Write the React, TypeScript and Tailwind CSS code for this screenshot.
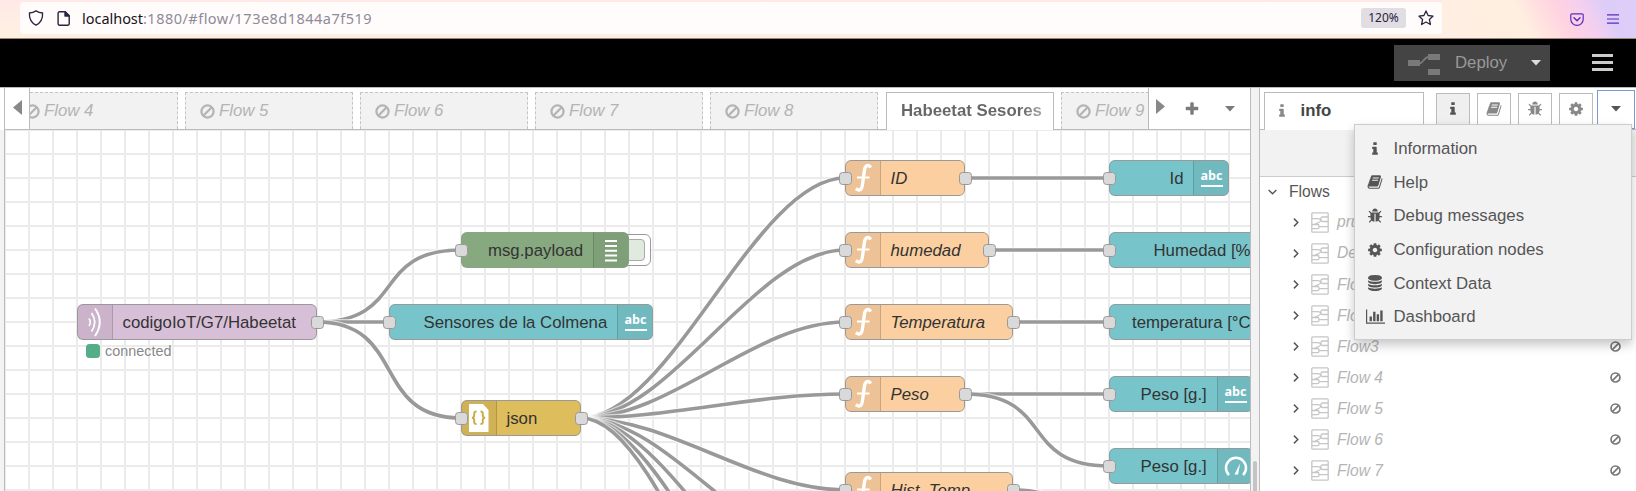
import React from "react";

const FA = {
  info: "M1216 1344v128q0 26-19 45t-45 19h-512q-26 0-45-19t-19-45v-128q0-26 19-45t45-19h64v-384h-64q-26 0-45-19t-19-45v-128q0-26 19-45t45-19h384q26 0 45 19t19 45v576h64q26 0 45 19t19 45zm-128-1152v192q0 26-19 45t-45 19h-256q-26 0-45-19t-19-45v-192q0-26 19-45t45-19h256q26 0 45 19t19 45z",
  book: "M1703 478q40 57 18 129l-275 906q-19 64-76.5 107.5t-122.5 43.5h-923q-77 0-148.5-53.5t-99.5-131.5q-24-67-2-127 0-4 3-27t4-37q1-8-3-21.5t-3-19.5q2-11 8-21t16.5-23.5 16.5-23.5q23-38 45-91.5t30-91.5q3-10 .5-30t-.5-28q3-11 17-28t17-23q21-36 42-92t25-90q1-9-2.5-32t.5-28q4-13 22-30.5t22-22.5q19-26 42.5-84.5t27.5-96.5q1-8-3-25.5t-2-26.5q2-8 9-18t18-23 17-21q8-12 16.5-30.5t15-35 16-36 19.5-32 26.5-23.5 36-11.5 47.5 5.5l-1 3q38-9 51-9h761q74 0 114 56t18 130l-274 906q-36 119-71.5 153.5t-128.5 34.5h-869q-27 0-38 15-11 16-1 43 24 70 144 70h923q29 0 56-15.5t35-41.5l300-987q7-22 5-57 38 15 59 43zm-1064 2q-4 13 2 22.5t20 9.5h608q13 0 25.5-9.5t16.5-22.5l21-64q4-13-2-22.5t-20-9.5h-608q-13 0-25.5 9.5t-16.5 22.5zm-83 256q-4 13 2 22.5t20 9.5h608q13 0 25.5-9.5t16.5-22.5l21-64q4-13-2-22.5t-20-9.5h-608q-13 0-25.5 9.5t-16.5 22.5z",
  bug: "M1696 960q0 26-19 45t-45 19h-224q0 171-67 290l208 209q19 19 19 45t-19 45q-18 19-45 19t-45-19l-198-197q-5 5-15 13t-42 28.5-65 36.5-82 29-97 13v-896h-128v896q-51 0-101.5-13.5t-87-33-66-39-43.5-32.5l-15-14-183 207q-20 21-48 21-24 0-43-16-19-18-20.5-44.5t15.5-46.5l202-227q-58-114-58-274h-224q-26 0-45-19t-19-45 19-45 45-19h224v-294l-173-173q-19-19-19-45t19-45 45-19 45 19l173 173h844l173-173q19-19 45-19t45 19 19 45-19 45l-173 173v294h224q26 0 45 19t19 45zm-480-576h-640q0-133 93.5-226.5t226.5-93.5 226.5 93.5 93.5 226.5z",
  cog: "M1152 896q0-106-75-181t-181-75-181 75-75 181 75 181 181 75 181-75 75-181zm512-109v222q0 12-8 23t-20 13l-185 28q-19 54-39 91 35 50 107 138 10 12 10 25t-9 23q-27 37-99 108t-94 71q-12 0-26-9l-138-108q-44 23-91 38-16 136-29 186-7 28-36 28h-222q-14 0-24.5-8.5t-11.5-21.5l-28-184q-49-16-90-37l-141 107q-10 9-25 9-14 0-25-11-126-114-165-168-7-10-7-23 0-12 8-23 15-21 51-66.5t54-70.5q-27-50-41-99l-183-27q-13-2-21-12.5t-8-23.5v-222q0-12 8-23t19-13l186-28q14-46 39-92-40-57-107-138-10-12-10-24 0-10 9-23 26-36 98.5-107.5t94.5-71.5q13 0 26 10l138 107q44-23 91-38 16-136 29-186 7-28 36-28h222q14 0 24.5 8.5t11.5 21.5l28 184q49 16 90 37l142-107q9-9 24-9 13 0 25 10 129 119 165 170 7 8 7 22 0 12-8 23-15 21-51 66.5t-54 70.5q26 50 41 98l183 28q13 2 21 12.5t8 23.5z",
  database:
    "M896 768q237 0 443-43t325-127v170q0 69-103 128t-280 93.5-385 34.5-385-34.5-280-93.5-103-128v-170q119 84 325 127t443 43zm0 768q237 0 443-43t325-127v170q0 69-103 128t-280 93.5-385 34.5-385-34.5-280-93.5-103-128v-170q119 84 325 127t443 43zm0-384q237 0 443-43t325-127v170q0 69-103 128t-280 93.5-385 34.5-385-34.5-280-93.5-103-128v-170q119 84 325 127t443 43zm0-1152q208 0 385 34.5t280 93.5 103 128v128q0 69-103 128t-280 93.5-385 34.5-385-34.5-280-93.5-103-128v-128q0-69 103-128t280-93.5 385-34.5z",
  chart:
    "M640 896v512h-256v-512h256zm384-512v1024h-256v-1024h256zm1024 1152v128h-2048v-1536h128v1408h1920zm-640-896v768h-256v-768h256zm384-384v1152h-256v-1152h256z",
  plus: "M1600 736v192q0 40-28 68t-68 28h-416v416q0 40-28 68t-68 28h-192q-40 0-68-28t-28-68v-416h-416q-40 0-68-28t-28-68v-192q0-40 28-68t68-28h416v-416q0-40 28-68t68-28h192q40 0 68 28t28 68v416h416q40 0 68 28t28 68z",
};

type FaName = keyof typeof FA;

function Fa({ name, size = "h-[16px] w-[16px]" }: { name: FaName; size?: string }) {
  const wide = name === "chart";
  return (
    <svg
      viewBox={wide ? "0 0 2048 1792" : "0 0 1792 1792"}
      className={`shrink-0 fill-current ${wide ? "h-[17px] w-[19px]" : size}`}
    >
      <path d={FA[name]} />
    </svg>
  );
}

function Ban({ className = "" }: { className?: string }) {
  return (
    <svg viewBox="0 0 16 16" className={`shrink-0 ${className}`} fill="none" stroke="currentColor" strokeWidth="2.400">
      <circle cx="8" cy="8" r="6.500" />
      <path d="M3.500 12.500L12.500 3.500" />
    </svg>
  );
}

function Caret({ className = "" }: { className?: string }) {
  return (
    <svg viewBox="0 0 10 6" className={`h-[6px] w-[10px] shrink-0 fill-current ${className}`}>
      <path d="M0 0h10L5 5.600z" />
    </svg>
  );
}

function BrowserBar() {
  return (
    <div className="flex h-[39px] w-full shrink-0 items-start border-b border-[#9c8878] bg-[linear-gradient(180deg,#ffe9e6_0%,#ffeee4_60%,#fdf0e0_100%)] pl-5">
      <div className="mt-[2px] flex h-[32px] w-[1422px] shrink-0 items-center rounded bg-[#fffcfb] pl-[8px] pr-[8px] text-[#2b2340]">
        <svg viewBox="0 0 16 16" className="h-4 w-4" fill="none" stroke="currentColor" strokeWidth="1.300" strokeLinejoin="round">
          <path d="M8 .9c2 1.400 4.300 2 6.600 2.100.3 5.300-1.600 9.600-6.600 12.200C3 12.600 1.100 8.300 1.400 3 3.700 2.900 6 2.300 8 .9z" />
        </svg>
        <svg viewBox="0 0 13 15" className="ml-[13px] h-[15px] w-[13px]" fill="none" stroke="currentColor" strokeWidth="1.400" strokeLinejoin="round">
          <path d="M2.500 .8H8.200L12.200 4.800V12.800a1.400 1.400 0 0 1-1.400 1.400H2.500A1.400 1.400 0 0 1 1.100 12.800V2.200A1.400 1.400 0 0 1 2.500.8z" />
          <path d="M8 .8V5h4.200z" fill="currentColor" />
        </svg>
        <div className="ml-[12px] whitespace-nowrap font-['Noto_Sans',sans-serif] text-[14.500px] leading-none text-[#8f8a9a]">
          <span className="tracking-[-0.03px] text-[#15141a]">localhost</span>
          <span className="tracking-[0.480px]">:1880/#flow/173e8d1844a7f519</span>
        </div>
        <div className="ml-auto flex h-5 w-[45px] items-center justify-center rounded-[3px] bg-[#e0dde3] font-['Noto_Sans',sans-serif] text-[12px] text-[#2b2340]">
          120%
        </div>
        <svg viewBox="0 0 16 16" className="ml-[12px] h-4 w-4" fill="none" stroke="currentColor" strokeWidth="1.300" strokeLinejoin="round">
          <path d="M8 .9l2.100 4.600 5 .6-3.700 3.400 1 5L8 12l-4.400 2.500 1-5L.9 6.100l5-.6z" />
        </svg>
      </div>
      <div className="flex h-[38px] flex-1 items-center justify-end bg-[linear-gradient(62deg,#ffeee2_0%,#ffefe0_42%,#ffe3e0_50%,#ffd2e2_62%,#f3cff0_74%,#dccdf8_84%,#dccdfa_100%)] pr-[17px] text-[#5a2cb8]">
        <svg viewBox="0 0 14 13" className="h-[13px] w-[14px]" fill="none" stroke="currentColor" strokeWidth="1.200" strokeLinecap="round" strokeLinejoin="round">
          <path d="M2 .8h10a1.200 1.200 0 0 1 1.200 1.200v4.200a6.200 6.200 0 0 1-12.400 0V2A1.200 1.200 0 0 1 2 .8z" />
          <path d="M4 4.800l3 2.900 3-2.900" strokeWidth="1.400" />
        </svg>
        <svg viewBox="0 0 12 10" className="ml-[23px] h-[10px] w-3" stroke="currentColor" strokeWidth="1.200">
          <path d="M0 .8h12M0 5h12M0 9.200h12" />
        </svg>
      </div>
    </div>
  );
}

function Header() {
  return (
    <div className="flex h-[48px] w-full shrink-0 items-center justify-end bg-black pr-[23px]">
      <div className="flex h-[36px] w-[156px] items-center bg-[#444] text-[#999]">
        <svg viewBox="0 0 32 21" className="ml-[14px] mt-[2px] h-[21px] w-8" fill="#797979">
          <rect x="0" y="6" width="12" height="6" />
          <rect x="20" y="0" width="12" height="6" />
          <rect x="20" y="15" width="12" height="6" />
          <path d="M11 9.500C16 9.500 15 3 21 3" fill="none" stroke="#797979" strokeWidth="1.800" />
        </svg>
        <span className="ml-[15px] text-[16.800px]">Deploy</span>
        <Caret className="ml-auto mr-[9px] text-[#ddd]" />
      </div>
      <div className="mb-px ml-[42px] flex w-[21px] flex-col gap-[4px]">
        <span className="h-[3px] bg-[#ccc]" />
        <span className="h-[3px] bg-[#ccc]" />
        <span className="h-[3px] bg-[#ccc]" />
      </div>
    </div>
  );
}

function FlowTab({ label }: { label: string }) {
  return (
    <div className="flex h-[37px] w-[168px] shrink-0 items-center border border-b-0 border-dashed border-[#c4c4c4] bg-[#f2f2f2] pl-[14px] text-[16.800px] italic text-[#b4b4b4]">
      <Ban className="mr-[4px] h-[15px] w-[15px]" />
      {label}
    </div>
  );
}

function TabBar() {
  return (
    <div className="flex h-[42px] shrink-0 border-b border-[#bbb] bg-white text-[#7b7b7b]">
      <div className="flex w-[25px] shrink-0 items-center border-r border-[#bbb] pl-[8px]">
        <svg viewBox="0 0 9 15" className="mb-[2px] h-[15px] w-[9px] fill-[#888]">
          <path d="M9 0v15L0 7.500z" />
        </svg>
      </div>
      <div className="flex h-[42px] w-[1118px] shrink-0 items-end overflow-hidden">
        <div className="-ml-[20px] flex items-end gap-[7px] pb-px">
          <FlowTab label="Flow 4" />
          <FlowTab label="Flow 5" />
          <FlowTab label="Flow 6" />
          <FlowTab label="Flow 7" />
          <FlowTab label="Flow 8" />
          <div className="-mb-px ml-px flex h-[38px] w-[168px] shrink-0 items-center overflow-hidden border border-b-0 border-[#bbb] bg-white pb-px pl-[14px]">
            <span className="whitespace-nowrap bg-gradient-to-r from-[#666] from-85% to-[#aaa] bg-clip-text text-[16.800px] font-bold text-transparent">
              Habeetat Sesores
            </span>
          </div>
          <FlowTab label="Flow 9" />
        </div>
      </div>
      <div className="flex flex-1 items-center border-l border-[#bbb]">
        <svg viewBox="0 0 9 15" className="mb-[4px] ml-[7px] h-[15px] w-[9px] fill-[#888]">
          <path d="M0 0v15l9-7.500z" />
        </svg>
        <span className="ml-[19px]">
          <Fa name="plus" />
        </span>
        <Caret className="ml-auto mr-[15px]" />
      </div>
    </div>
  );
}

const ORIGIN_X = 5;
const ORIGIN_Y = 130;

const wires: [number, number, number, number][] = [
  [317, 322, 461, 250],
  [317, 322, 389, 322],
  [317, 322, 461, 418],
  [581, 418, 845, 178],
  [581, 418, 845, 250],
  [581, 418, 845, 322],
  [581, 418, 845, 394],
  [581, 418, 845, 490],
  [581, 418, 845, 562],
  [581, 418, 845, 634],
  [581, 418, 845, 706],
  [581, 418, 845, 778],
  [965, 178, 1109, 178],
  [989, 250, 1109, 250],
  [1013, 322, 1109, 322],
  [965, 394, 1109, 394],
  [965, 394, 1109, 466],
  [1013, 490, 1109, 538],
];

function wirePath([x1, y1, x2, y2]: [number, number, number, number]) {
  const reach = 90 * Math.min(1, Math.hypot(x2 - x1, y2 - y1) / 120);
  return `M${x1} ${y1}C${x1 + reach} ${y1} ${x2 - reach} ${y2} ${x2} ${y2}`;
}

type IconKind = "function" | "text" | "gauge" | "mqtt" | "json" | "debug";

type FlowNode = {
  x: number;
  y: number;
  w: number;
  label: string;
  labelX: number;
  color: string;
  icon?: IconKind;
  side: "left" | "right";
  input?: boolean;
  output?: boolean;
  italic?: boolean;
};

const UI = "bg-[#77c5cb]";
const FN = "bg-[#fccfa0]";

const nodes: FlowNode[] = [
  { x: 77, y: 322, w: 240, label: "codigoIoT/G7/Habeetat", labelX: 45.5, color: "bg-[#d8bfd8]", icon: "mqtt", side: "left", output: true },
  { x: 461, y: 250, w: 168, label: "msg.payload", labelX: 27, color: "bg-[#87a980]", icon: "debug", side: "right", input: true },
  { x: 389, y: 322, w: 264, label: "Sensores de la Colmena", labelX: 34.5, color: UI, icon: "text", side: "right", input: true },
  { x: 461, y: 418, w: 120, label: "json", labelX: 45.5, color: "bg-[#debd5c]", icon: "json", side: "left", input: true, output: true },
  { x: 845, y: 178, w: 120, label: "ID", labelX: 45.5, color: FN, icon: "function", side: "left", input: true, output: true, italic: true },
  { x: 845, y: 250, w: 144, label: "humedad", labelX: 45.5, color: FN, icon: "function", side: "left", input: true, output: true, italic: true },
  { x: 845, y: 322, w: 168, label: "Temperatura", labelX: 45.5, color: FN, icon: "function", side: "left", input: true, output: true, italic: true },
  { x: 845, y: 394, w: 120, label: "Peso", labelX: 45.5, color: FN, icon: "function", side: "left", input: true, output: true, italic: true },
  { x: 845, y: 490, w: 168, label: "Hist. Temp", labelX: 45.5, color: FN, icon: "function", side: "left", input: true, output: true, italic: true },
  { x: 1109, y: 178, w: 120, label: "Id", labelX: 60.5, color: UI, icon: "text", side: "right", input: true },
  { x: 1109, y: 250, w: 192, label: "Humedad [%]", labelX: 44.5, color: UI, side: "right", input: true },
  { x: 1109, y: 322, w: 192, label: "temperatura [°C]", labelX: 23, color: UI, side: "right", input: true },
  { x: 1109, y: 394, w: 144, label: "Peso [g.]", labelX: 31.5, color: UI, icon: "text", side: "right", input: true },
  { x: 1109, y: 466, w: 144, label: "Peso [g.]", labelX: 31.5, color: UI, icon: "gauge", side: "right", input: true },
];

function NodeIcon({ kind }: { kind: IconKind }) {
  if (kind === "text")
    return (
      <span className="flex flex-col items-center">
        <span className="font-['Open_Sans',sans-serif] text-[12.500px] font-bold leading-[14px] text-white">abc</span>
        <span className="mt-[2px] h-[2px] w-[22px] bg-white" />
      </span>
    );
  return (
    <svg viewBox="0 0 36 36" className="h-[36px] w-[36px] shrink-0" fill="none" stroke="#fff">
      {kind === "function" && (
        <>
          <path d="M26 7.300C22.600 3.900 20 5.600 19.400 10.500L17.600 24C16.900 29.800 14.700 31.500 10.800 28.700" strokeWidth="3.300" />
          <path d="M12 17.600h12.500" strokeWidth="2" />
        </>
      )}
      {kind === "mqtt" && (
        <>
          <path d="M12 14.500q2.600 4 0 7.500" strokeWidth="1.700" />
          <path d="M14.500 9q6.500 9 0 18.500" strokeWidth="1.800" />
          <path d="M18 4.500q9.500 13.500 0 27.500" strokeWidth="1.900" />
        </>
      )}
      {kind === "json" && (
        <>
          <path d="M8 4h14l5.500 6v22H8z" fill="#fff" stroke="none" />
          <path d="M15.500 11.500q-2.600 0-2.300 2.700.4 3.300-2.200 3.600 2.600.3 2.200 3.600-.3 2.700 2.300 2.700M19.500 11.500q2.600 0 2.300 2.700-.4 3.300 2.200 3.600-2.600.3-2.200 3.600.3 2.700-2.300 2.700" stroke="#cba943" strokeWidth="2" />
        </>
      )}
      {kind === "debug" && <path d="M11 9h12M11 14h12M11 18.800h12M11 23.600h12M11 28.400h12" strokeWidth="2" />}
      {kind === "gauge" && (
        <>
          <path d="M11 27A10 10 0 1 1 25 27" strokeWidth="2.500" />
          <path d="M16.500 26.500l3.500 0L22.300 15z" fill="#fff" stroke="none" />
        </>
      )}
    </svg>
  );
}

function Port({ end }: { end: "left" | "right" }) {
  return (
    <span
      className={`absolute top-[11.500px] h-[13px] w-[13px] rounded-[3.500px] border border-[#999] bg-[#d9d9d9] ${
        end === "left" ? "-left-[6.500px]" : "-right-[6.500px]"
      }`}
    />
  );
}

function NodeBox({ node }: { node: FlowNode }) {
  return (
    <div className="absolute h-[36px]" style={{ left: node.x - ORIGIN_X, top: node.y - 18 - ORIGIN_Y, width: node.w }}>
      <div className={`relative h-full w-full overflow-hidden rounded-[6px] ${node.color}`}>
        {node.icon && (
          <div
            className={`absolute inset-y-0 flex w-[36px] items-center justify-center bg-black/[0.06] ${
              node.side === "left" ? "left-0 border-r border-black/15" : "right-0 border-l border-black/15"
            }`}
          >
            <NodeIcon kind={node.icon} />
          </div>
        )}
        <span
          className={`absolute top-0 whitespace-nowrap text-[16.800px] leading-[37px] text-[#333] ${node.italic ? "italic" : ""}`}
          style={{ left: node.labelX }}
        >
          {node.label}
        </span>
        <span className={`absolute inset-0 rounded-[6px] border ${node.icon === "debug" ? "border-[#999]/40" : "border-[#999]"}`} />
      </div>
      {node.input && <Port end="left" />}
      {node.output && <Port end="right" />}
    </div>
  );
}

function Canvas() {
  return (
    <div className="relative flex-1 overflow-hidden bg-white bg-[linear-gradient(90deg,#ebebeb_0,#ebebeb_2px,transparent_2px),linear-gradient(180deg,#ebebeb_0,#ebebeb_2px,transparent_2px)] bg-[length:24px_24px] bg-[position:-1px_-1px]">
      <svg className="absolute left-0 top-0 h-full w-full" viewBox="5 130 1245 361" fill="none">
        {wires.map((w) => (
          <g key={w.join()}>
            <path d={wirePath(w)} stroke="#fff" strokeWidth="6" opacity="0.6" />
            <path d={wirePath(w)} stroke="#999" strokeWidth="3.600" />
          </g>
        ))}
      </svg>
      <div className="absolute left-[609px] top-[104px] h-[32px] w-[37px] rounded-[6px] border border-[#999] bg-white">
        <div className="ml-px mt-[4px] h-[22px] w-[29px] rounded-[4px] border border-[#a8aaa6] bg-[#e1eadf]" />
      </div>
      {nodes.map((n) => (
        <NodeBox key={`${n.x}-${n.y}`} node={n} />
      ))}
      <div className="absolute left-[81px] top-[213px] flex items-center">
        <span className="h-[14px] w-[14px] rounded-[3.500px] bg-[#53ad88]" />
        <span className="ml-[5px] text-[14.400px] leading-[16px] text-[#888]">connected</span>
      </div>
    </div>
  );
}

function FlowIcon() {
  return (
    <svg viewBox="0 0 18 21" className="h-[21px] w-[18px] shrink-0" fill="none" stroke="#c6c6c6" strokeWidth="1.300">
      <rect x=".8" y=".8" width="16.400" height="19.400" rx="1" />
      <path d="M1 6.600h5.500Q8 6.600 9.500 7.500M17 9.500h-5.500a1.500 1.500 0 0 1-1.500-1.500V6.500A1.500 1.500 0 0 1 11.500 5H17M1 12.500h5.500a1.500 1.500 0 0 1 1.500 1.500v1.200a1.500 1.500 0 0 1-1.500 1.500H1M8 14.600h9M10 8Q9 10.500 7 10.800T3.500 12.500" />
    </svg>
  );
}

function TreeRow({ label }: { label: string }) {
  return (
    <div className="flex h-[31.100px] shrink-0 items-center pl-[33px] pr-[15px]">
      <svg viewBox="0 0 6 10" className="h-[9px] w-[6px]" fill="none" stroke="#555" strokeWidth="1.600">
        <path d="M.7.7L5 5 .7 9.300" />
      </svg>
      <span className="ml-[12px] flex items-center">
        <FlowIcon />
      </span>
      <span className="ml-[8px] text-[15.600px] italic text-[#b4b4b4]">{label}</span>
      <Ban className="ml-auto h-[11px] w-[11px] text-[#777]" />
    </div>
  );
}

function SidebarButton({ name, active = false }: { name: FaName; active?: boolean }) {
  return (
    <div
      className={`flex h-[34px] w-[34px] items-center justify-center border border-[#bbb] pb-[2px] pr-px ${
        active ? "bg-[#efefef] text-[#555]" : "bg-white text-[#888]"
      }`}
    >
      <Fa name={name} />
    </div>
  );
}

const menuItems: { icon: FaName; label: string }[] = [
  { icon: "info", label: "Information" },
  { icon: "book", label: "Help" },
  { icon: "bug", label: "Debug messages" },
  { icon: "cog", label: "Configuration nodes" },
  { icon: "database", label: "Context Data" },
  { icon: "chart", label: "Dashboard" },
];

function SidebarMenu() {
  return (
    <div className="absolute left-[94px] top-[36px] flex h-[216px] w-[278px] flex-col border border-[#ccc] bg-[#f2f2f2] pt-[7px] shadow-[0_5px_10px_rgba(0,0,0,0.22)]">
      {menuItems.map((m) => (
        <div key={m.label} className="flex h-[33.600px] shrink-0 items-center text-[16.800px] text-[#555]">
          <span className="ml-[10px] flex w-[20px] justify-center">
            <Fa name={m.icon} />
          </span>
          <span className="ml-[8.500px]">{m.label}</span>
        </div>
      ))}
    </div>
  );
}

function Sidebar() {
  return (
    <div className="relative flex w-[377px] shrink-0 flex-col border-l border-[#bbb] bg-white">
      <div className="flex h-[42px] shrink-0 items-end border-b border-[#bbb]">
        <div className="-mb-px ml-[4px] flex h-[38px] w-[160px] items-center border border-b-0 border-[#bbb] bg-white pb-px pl-[9px] text-[#888]">
          <Fa name="info" />
          <span className="ml-[10.500px] text-[16.800px] font-bold text-[#444]">info</span>
        </div>
        <div className="mb-[2px] ml-[12px] flex gap-[7px]">
          <SidebarButton name="info" active />
          <SidebarButton name="book" />
          <SidebarButton name="bug" />
          <SidebarButton name="cog" />
        </div>
        <div className="ml-[4px] flex h-[39px] w-[38px] items-center justify-center border border-[#7b9bd0] bg-white pb-[2px] pr-px text-[#555]">
          <Caret />
        </div>
      </div>
      <div className="h-[47px] shrink-0 border-b border-[#ccc] bg-[#f2f2f2]" />
      <div className="flex h-[29px] shrink-0 items-center pl-[8px] text-[15.600px] text-[#555]">
        <svg viewBox="0 0 10 6" className="h-[6px] w-[9px]" fill="none" stroke="#555" strokeWidth="1.500">
          <path d="M.7.7L5 5 9.300.7" />
        </svg>
        <span className="ml-[12px]">Flows</span>
      </div>
      <div className="flex min-h-0 flex-1 flex-col overflow-hidden pt-[0.500px]">
        {["prueba", "Debug", "Flow 1", "Flow 2", "Flow3", "Flow 4", "Flow 5", "Flow 6", "Flow 7"].map((l) => (
          <TreeRow key={l} label={l} />
        ))}
      </div>
      <SidebarMenu />
    </div>
  );
}

export default function App() {
  return (
    <div className="flex h-[491px] w-[1636px] flex-col overflow-hidden bg-white font-['Liberation_Sans',Arial,sans-serif]">
      <BrowserBar />
      <Header />
      <div className="flex min-h-0 flex-1 border-t border-[#bbb]">
        <div className="w-[5px] shrink-0 border-r border-[#bbb] pt-[42px]">
          <div className="h-full bg-[#f3f3f3]" />
        </div>
        <div className="flex w-[1245px] shrink-0 flex-col">
          <TabBar />
          <Canvas />
        </div>
        <div className="flex w-[9px] shrink-0 items-end justify-center border-l border-[#bbb] bg-[#f2f2f2]">
          <div className="h-[30px] w-[4px] rounded-t bg-[#c4c4c4]" />
        </div>
        <Sidebar />
      </div>
    </div>
  );
}
